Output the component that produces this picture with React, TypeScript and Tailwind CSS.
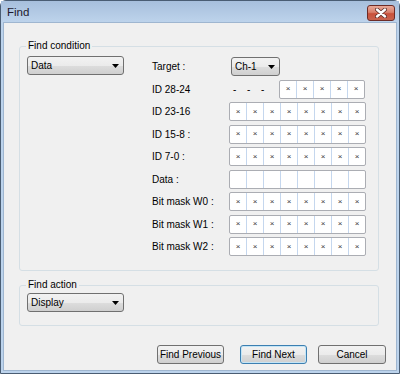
import React from "react";

const font = "font-['Liberation_Sans',Arial,sans-serif]";

function Dropdown({ label, width }: { label: string; width: string }) {
  return (
    <div
      className={`${width} h-[19px] flex items-center justify-between rounded-[3px] border border-[#707070] bg-[linear-gradient(#f2f2f2_0%,#ebebeb_50%,#dddddd_51%,#cfcfcf_100%)] pl-[3px] pr-[4px] text-[10px] text-black`}
    >
      <span>{label}</span>
      <svg width="7" height="4" viewBox="0 0 7 4">
        <path d="M0 0h7L3.5 4z" fill="#000" />
      </svg>
    </div>
  );
}

function Cells({ count, filled }: { count: number; filled: boolean }) {
  return (
    <div
      className="flex h-[19px] rounded-[2px] border border-[#abadb3] bg-white"
      style={{ width: count * 17 + 1 }}
    >
      {Array.from({ length: count }).map((_, i) => (
        <div
          key={i}
          className={`flex flex-1 items-center justify-center text-[8px] leading-none text-[#3a3a3a] ${
            i > 0 ? "border-l border-[#c5d7ee]" : ""
          }`}
        >
          {filled ? "×" : ""}
        </div>
      ))}
    </div>
  );
}

function Button({ label, primary }: { label: string; primary?: boolean }) {
  return (
    <button
      className={`h-[19px] w-full rounded-[3px] border text-[10px] text-black bg-[linear-gradient(#f2f2f2_0%,#ebebeb_50%,#dddddd_51%,#cfcfcf_100%)] ${
        primary ? "border-[#3c7fb1] shadow-[inset_0_0_0_1px_#c4e5f6]" : "border-[#707070]"
      }`}
    >
      {label}
    </button>
  );
}

function GroupBox({
  title,
  className,
  children,
}: {
  title: string;
  className: string;
  children: React.ReactNode;
}) {
  return (
    <div className={`relative rounded-[3px] border border-[#d5dfe5] ${className}`}>
      <span className="absolute -top-[7px] left-[6px] bg-[#f0f0f0] px-[2px] text-[10px] leading-[12px] text-black">
        {title}
      </span>
      {children}
    </div>
  );
}

const rows = [
  { label: "ID 23-16", filled: true },
  { label: "ID 15-8 :", filled: true },
  { label: "ID 7-0 :", filled: true },
  { label: "Data :", filled: false },
  { label: "Bit mask W0 :", filled: true },
  { label: "Bit mask W1 :", filled: true },
  { label: "Bit mask W2 :", filled: true },
];

export default function App() {
  return (
    <div className={`${font} w-[400px] h-[374px] overflow-hidden`}>
      <div className="flex h-full w-full flex-col rounded-t-[6px] border border-[#4a5d73] bg-[#bcd3ec]">
        {/* Title bar */}
        <div className="flex h-[22px] shrink-0 items-start bg-[linear-gradient(#a7bfdc,#bed4ec)] pl-[6px] pr-[4px]">
          <span className="mt-[4px] text-[11.5px] leading-[14px] text-[#1e1a2e]">Find</span>
          <div className="ml-auto mt-[4px] flex h-[16px] w-[28px] items-center justify-center rounded-[3px] border border-[#6d2b26] bg-[linear-gradient(#e8a898_0%,#d9806c_45%,#c9513b_55%,#c8644f_100%)]">
            <svg width="12" height="10" viewBox="0 0 12 10">
              <path
                d="M2 1.5l8 7M10 1.5l-8 7"
                stroke="#5a2a25"
                strokeWidth="4"
                strokeLinecap="round"
              />
              <path d="M2 1.5l8 7M10 1.5l-8 7" stroke="#fff" strokeWidth="2.4" strokeLinecap="round" />
            </svg>
          </div>
        </div>

        {/* Client */}
        <div className="mx-[3px] mb-[3px] flex flex-1 flex-col bg-[#f0f0f0] pl-[15px] pt-[23px] shadow-[0_0_0_1px_#9fb6d0]">
          <GroupBox title="Find condition" className="h-[225px] w-[360px]">
            <div className="flex pl-[7px] pt-[9px]">
              <Dropdown label="Data" width="w-[97px]" />
              <div className="ml-[28px] mt-[1px] flex flex-col gap-[3.5px]">
                <div className="flex h-[19px] items-center">
                  <span className="w-[79px] text-[10px] text-black">Target :</span>
                  <Dropdown label="Ch-1" width="w-[49px]" />
                </div>
                <div className="flex h-[19px] items-center">
                  <span className="w-[77px] text-[10px] text-black">ID 28-24</span>
                  <div className="flex w-[50px] text-[10px] text-black">
                    <span className="ml-[4px] w-[14px]">-</span>
                    <span className="w-[14px]">-</span>
                    <span className="w-[14px]">-</span>
                  </div>
                  <Cells count={5} filled />
                </div>
                {rows.map((r) => (
                  <div key={r.label} className="flex h-[19px] items-center">
                    <span className="w-[77px] text-[10px] text-black">{r.label}</span>
                    <Cells count={8} filled={r.filled} />
                  </div>
                ))}
              </div>
            </div>
          </GroupBox>

          <GroupBox title="Find action" className="mt-[14px] h-[41px] w-[360px]">
            <div className="pl-[7px] pt-[7px]">
              <Dropdown label="Display" width="w-[97px]" />
            </div>
          </GroupBox>

          <div className="mt-[15px] flex">
            <div className="ml-[138px] w-[67px]">
              <Button label="Find Previous" />
            </div>
            <div className="ml-[16px] w-[67px]">
              <Button label="Find Next" primary />
            </div>
            <div className="ml-[11px] w-[68px]">
              <Button label="Cancel" />
            </div>
          </div>
        </div>
      </div>
    </div>
  );
}
